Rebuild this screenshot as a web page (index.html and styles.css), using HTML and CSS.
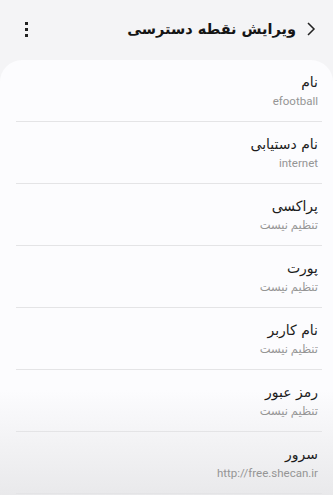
FILE: index.html
```html
<!DOCTYPE html>
<html lang="fa" dir="rtl">

<head>
  <meta charset="UTF-8" />
  <meta name="viewport" content="width=device-width, initial-scale=1.0" />
  <title>ویرایش نقطه دسترسی</title>
  <link rel="stylesheet" href="styles.css">
</head>

<body>
  <!-- نوار بالا -->
  <div class="top">
    <span class="back">
      <svg width="10" height="16" viewBox="0 0 10 16"><path d="M2 2 L8 8 L2 14" fill="none" stroke="#222" stroke-width="1.5"/></svg>
    </span>
    <h1 class="title">ویرایش نقطه دسترسی</h1>
    <span class="more"><i></i><i></i><i></i></span>
  </div>

  <!-- لیست تنظیمات -->
  <ul class="list">
    <li><p class="name">نام</p><p class="val">efootball</p></li>
    <li><p class="name">نام دستیابی</p><p class="val">internet</p></li>
    <li><p class="name">پراکسی</p><p class="val">تنظیم نیست</p></li>
    <li><p class="name">پورت</p><p class="val">تنظیم نیست</p></li>
    <li><p class="name">نام کاربر</p><p class="val">تنظیم نیست</p></li>
    <li><p class="name">رمز عبور</p><p class="val">تنظیم نیست</p></li>
    <li><p class="name">سرور</p><p class="val">http://free.shecan.ir</p></li>
  </ul>
</body>

</html>
```
FILE: styles.css
```css
* {
  margin: 0;
  padding: 0;
  box-sizing: border-box;
}

ul {
  list-style: none;
}

body {
  background: #f4f4f6;
  font-family: Roboto, "DejaVu Sans", sans-serif;
  color: #1e1e1e;
  height: 495px;
  overflow: hidden;
}

.top {
  height: 60px;
  display: flex;
  align-items: center;
  padding: 0 17px 2px 22px;
}

.back {
  display: flex;
  width: 10px;
  margin-left: 10px;
}

.title {
  flex: 1;
  font: bold 14.5px "DejaVu Sans", sans-serif;
  color: #151515;
}

.more {
  display: flex;
  flex-direction: column;
  gap: 3px;
  padding: 0 3px;
}

.more i {
  width: 3px;
  height: 3px;
  background: #222;
}

.list {
  background: linear-gradient(#fcfcfe 330px, #f3f3f5 380px, #e9e9eb);
  border-radius: 22px 22px 0 0;
  height: 435px;
}

.list li {
  margin: 0 11px 0 16px;
  padding: 12px 4px 0 0;
  height: 62px;
  border-bottom: 1px solid #e4e4e6;
}

.list .name {
  font: 14px/21px "DejaVu Sans", sans-serif;
  color: #1c1c1c;
}

.list .val {
  font: 11.5px/16px Roboto, "DejaVu Sans", sans-serif;
  color: #959595;
}
```
